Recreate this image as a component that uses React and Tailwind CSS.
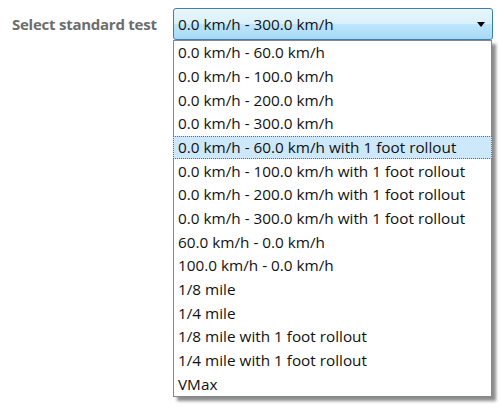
import { useState } from 'react'

const options = [
  '0.0 km/h - 60.0 km/h',
  '0.0 km/h - 100.0 km/h',
  '0.0 km/h - 200.0 km/h',
  '0.0 km/h - 300.0 km/h',
  '0.0 km/h - 60.0 km/h with 1 foot rollout',
  '0.0 km/h - 100.0 km/h with 1 foot rollout',
  '0.0 km/h - 200.0 km/h with 1 foot rollout',
  '0.0 km/h - 300.0 km/h with 1 foot rollout',
  '60.0 km/h - 0.0 km/h',
  '100.0 km/h - 0.0 km/h',
  '1/8 mile',
  '1/4 mile',
  '1/8 mile with 1 foot rollout',
  '1/4 mile with 1 foot rollout',
  'VMax',
]

const App = () => {
  const [highlighted] = useState(4)

  return (
    <div className="w-[500px] h-[407px] bg-white font-['Open_Sans',sans-serif] text-[15.3px] text-[#111]">
      <div className="flex pt-2 pl-3">
        <div className="w-[161px] h-8 flex items-center font-bold text-[15px] text-[#6d6d6d] tracking-[-0.25px]">
          Select standard test
        </div>
        <div className="flex flex-col w-[320px]">
          <div className="h-8 flex items-center justify-between pl-[4px] pr-[7px] rounded-[3px] border border-[#3c7fb1] bg-[linear-gradient(to_bottom,#eaf6fd_0%,#d9f0fc_50%,#bee6fd_50%,#a7d9f5_100%)]">
            <span>0.0 km/h - 300.0 km/h</span>
            <svg width="8" height="5" viewBox="0 0 8 5">
              <path d="M0 0h8L4 5z" fill="#000" />
            </svg>
          </div>
          <ul className="w-[319px] border border-[#828790] bg-white shadow-[4px_4px_3px_rgba(0,0,0,0.45)]">
            {options.map((label, i) => (
              <li
                key={label}
                className={
                  i === highlighted
                    ? 'h-[23.67px] flex items-center pl-[4px] bg-[#cde8fb] border border-dotted border-[#5a6a7a] -mx-px'
                    : 'h-[23.67px] flex items-center pl-[4px]'
                }
              >
                {label}
              </li>
            ))}
          </ul>
        </div>
      </div>
    </div>
  )
}

export default App
